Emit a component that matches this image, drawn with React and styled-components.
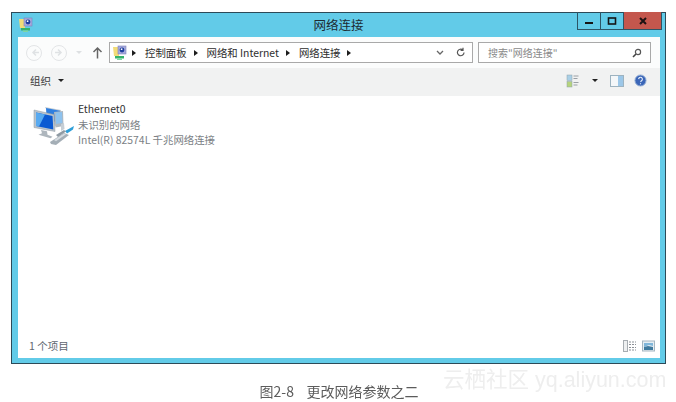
import React from 'react';
import styled, { createGlobalStyle } from 'styled-components';

const CJK = '"Noto Sans CJK SC", "Liberation Sans", sans-serif';

const GlobalStyle = createGlobalStyle`
  html, body {
    margin: 0;
    padding: 0;
    background: #fff;
    font-family: ${CJK};
  }
`;

const Page = styled.div`
  position: relative;
  width: 676px;
  height: 402px;
  overflow: hidden;
  padding: 12px 0 0 11px;
  box-sizing: border-box;
  filter: blur(0.45px);
`;

const Window = styled.div`
  width: 655px;
  height: 352px;
  box-sizing: border-box;
  border: 1px solid #2c4a58;
  background: #62cbe8;
  display: flex;
  flex-direction: column;
`;

const TitleBar = styled.div`
  position: relative;
  height: 24px;
  flex: none;
  display: flex;
  align-items: center;
  padding-left: 6px;
`;

const Title = styled.div`
  position: absolute;
  left: 0;
  right: 0;
  top: 3px;
  text-align: center;
  font-size: 12.5px;
  line-height: 17px;
  color: #1d2c33;
`;

const Controls = styled.div`
  position: absolute;
  top: -1px;
  right: 3px;
  display: flex;
`;

const ControlButton = styled.div`
  width: ${(p) => p.$w}px;
  height: 18px;
  box-sizing: border-box;
  border: 1px solid #2c5566;
  border-top: none;
  margin-left: -1px;
  background: ${(p) => p.$bg || 'transparent'};
  display: flex;
  align-items: center;
  justify-content: center;
`;

const Body = styled.div`
  flex: 1;
  margin: 0 5px 5px 6px;
  background: #fff;
  display: flex;
  flex-direction: column;
  min-height: 0;
`;

const NavBar = styled.div`
  height: 31px;
  flex: none;
  display: flex;
  align-items: center;
  padding-left: 8px;
  background: #fbfcfc;
`;

const NavCircle = styled.div`
  width: 16px;
  height: 16px;
  box-sizing: border-box;
  border: 1px solid #e3e5e7;
  border-radius: 50%;
  margin-right: 9px;
  display: flex;
  align-items: center;
  justify-content: center;
`;

const Caret = styled.span`
  width: 0;
  height: 0;
  flex: none;
  border-left: ${(p) => p.$size || 3}px solid transparent;
  border-right: ${(p) => p.$size || 3}px solid transparent;
  border-top: ${(p) => p.$size || 3}px solid ${(p) => p.$color || '#222'};
`;

const UpArrow = styled.div`
  margin: 0 6px 0 10px;
  display: flex;
`;

const AddressBox = styled.div`
  width: 364px;
  height: 21px;
  box-sizing: border-box;
  border: 1px solid #a9a9a9;
  background: #fff;
  display: flex;
  align-items: center;
  padding-left: 2px;
`;

const Crumb = styled.span`
  font-size: 10.4px;
  line-height: 14px;
  color: #2d2d2d;
  white-space: nowrap;
`;

const CrumbArrow = styled.span`
  width: 0;
  height: 0;
  flex: none;
  margin: 0 9px 0 ${(p) => p.$left || 7}px;
  border-top: 3px solid transparent;
  border-bottom: 3px solid transparent;
  border-left: 4px solid #1c1c1c;
`;

const AddressTools = styled.div`
  margin-left: auto;
  display: flex;
  align-items: center;
  gap: 12px;
  padding-right: 6px;
`;

const SearchBox = styled.div`
  width: 173px;
  height: 21px;
  margin-left: 5px;
  box-sizing: border-box;
  border: 1px solid #a9a9a9;
  background: #fff;
  display: flex;
  align-items: center;
  justify-content: space-between;
  padding: 0 8px 0 9px;
  font-size: 10px;
  color: #8a8a8a;
`;

const Toolbar = styled.div`
  height: 28px;
  flex: none;
  background: #f1f2f2;
  display: flex;
  align-items: center;
  padding: 0 13px 3px 12px;
  box-sizing: border-box;
`;

const ToolLabel = styled.span`
  font-size: 10.5px;
  color: #3b3b3b;
  margin-right: 7px;
`;

const ToolRight = styled.div`
  margin-left: auto;
  display: flex;
  align-items: center;
  gap: 12px;
`;

const HelpSlot = styled.span`
  display: flex;
  margin-left: -2px;
`;

const Content = styled.div`
  flex: 1;
  padding: 5px 0 0 15px;
  display: flex;
  align-items: flex-start;
  min-height: 0;
`;

const Item = styled.div`
  display: flex;
  gap: 2px;
`;

const ItemIcon = styled.div`
  width: 43px;
  height: 46px;
  flex: none;
  padding-top: 3px;
`;

const ItemText = styled.div`
  display: flex;
  flex-direction: column;
`;

const ItemLine = styled.div`
  font-size: 10.4px;
  line-height: 15.5px;
  white-space: nowrap;
  color: ${(p) => p.$color || '#7b7f85'};
`;

const StatusBar = styled.div`
  height: 23px;
  flex: none;
  display: flex;
  align-items: center;
  justify-content: space-between;
  padding: 0 5px 2px 11px;
  box-sizing: border-box;
  font-size: 10.5px;
  color: #5e6670;
`;

const StatusIcons = styled.div`
  display: flex;
  align-items: center;
  gap: 6px;
`;

const Caption = styled.div`
  margin: 19px 0 0 -9px;
  text-align: center;
  font-size: 14px;
  line-height: 17px;
  color: #5c5c5c;
  white-space: pre;
`;

const Watermark = styled.div`
  position: absolute;
  top: 368px;
  left: 443px;
  font-size: 21.5px;
  line-height: 24px;
  color: #eeeeee;
  white-space: nowrap;
  font-family: "Liberation Sans", "Noto Sans CJK SC", sans-serif;
`;

function NetworkFolder({ size = 15 }) {
  return (
    <svg width={size} height={size + 1} viewBox="0 0 15 16">
      <path d="M1 2h5l1 1v8H2z" fill="#f2dc78" />
      <rect x="6" y="1" width="8" height="8" fill="#a6a9dc" stroke="#7d82bd" strokeWidth="0.6" />
      <circle cx="10" cy="5" r="2.4" fill="#1f3f9e" />
      <rect x="8.8" y="3.4" width="1.6" height="1.6" fill="#fff" />
      <path d="M3 11h9v2.5H3z" fill="#35b36a" />
      <path d="M5 13.5h5v1.5H5z" fill="#7fd6a4" />
    </svg>
  );
}

function NavArrowIcon({ dir }) {
  const d = dir === 'left' ? 'M8 3.500L5 6.500L8 9.500M5 6.500H11' : 'M5 3.500L8 6.500L5 9.500M8 6.500H2';
  return (
    <svg width="13" height="13" viewBox="0 0 13 13">
      <path d={d} fill="none" stroke="#dfe2e4" strokeWidth="1.500" />
    </svg>
  );
}

function ComputerIcon() {
  return (
    <svg width="43" height="44" viewBox="0 0 43 44">
      <path d="M12 3l16 3 1 15-7 1z" fill="#c3ccd4" />
      <path d="M13 4l14 2.800 .8 12-14-2.800z" fill="#2f7fe0" />
      <path d="M21 8l9-1 .5 15-8 1.500z" fill="#aeb8c1" />
      <path d="M22.500 8.500l6.500-.5 .4 11-6.500 1z" fill="#8ec2ee" />
      <path d="M1 6l20 4.500 1 17-21-4z" fill="#b9c3cc" stroke="#8e99a3" strokeWidth="0.5" />
      <path d="M3 8.500l16.500 3.500 .8 13.500L3 22z" fill="#0b5ad2" />
      <path d="M3 8.500l9 2-6 12-3-.5z" fill="#58aaf0" />
      <path d="M8 26l6 1.200.5 3.500 5 2-2 1.500-12-3.500 3.500-1.500z" fill="#aeb6bd" />
      <path d="M28 20l3-1 .5 6-3.500 2z" fill="#c6ced5" />
      <path d="M17 38l14-9 5 2-13 10-5-1z" fill="#a4aeb6" />
      <path d="M21 36l10-6.500 2 .8-10 7z" fill="#d5dbe0" />
      <path d="M32 27l9-5-1 3.500-6 4z" fill="#2f9fd8" />
      <path d="M23 31l8-5 2 1.500-8 5.500z" fill="#8f9aa3" />
    </svg>
  );
}

export default function App() {
  return (
    <>
      <GlobalStyle />
      <Page>
        <Window>
          <TitleBar>
            <NetworkFolder />
            <Title>网络连接</Title>
            <Controls>
              <ControlButton $w={24}>
                <svg width="10" height="10" viewBox="0 0 10 10"><rect x="1" y="6" width="8" height="2" fill="#151515" /></svg>
              </ControlButton>
              <ControlButton $w={24}>
                <svg width="10" height="10" viewBox="0 0 10 10"><rect x="1.500" y="2" width="7" height="6" fill="none" stroke="#151515" strokeWidth="1.600" /></svg>
              </ControlButton>
              <ControlButton $w={39} $bg="#c4574d">
                <svg width="10" height="10" viewBox="0 0 10 10"><path d="M2 2L8 8M8 2L2 8" stroke="#1c1212" strokeWidth="2" /></svg>
              </ControlButton>
            </Controls>
          </TitleBar>
          <Body>
            <NavBar>
              <NavCircle><NavArrowIcon dir="left" /></NavCircle>
              <NavCircle><NavArrowIcon dir="right" /></NavCircle>
              <Caret $color="#dde0e2" />
              <UpArrow>
                <svg width="11" height="13" viewBox="0 0 11 13">
                  <path d="M5.500 12.500V2M1.500 6L5.500 2L9.500 6" fill="none" stroke="#666" strokeWidth="1.500" />
                </svg>
              </UpArrow>
              <AddressBox>
                <NetworkFolder />
                <CrumbArrow $left={5} />
                <Crumb>控制面板</Crumb>
                <CrumbArrow />
                <Crumb>网络和 Internet</Crumb>
                <CrumbArrow />
                <Crumb>网络连接</Crumb>
                <CrumbArrow />
                <AddressTools>
                  <svg width="8" height="6" viewBox="0 0 8 6"><path d="M1 1l3 3 3-3" fill="none" stroke="#666" strokeWidth="1.300" /></svg>
                  <svg width="10" height="11" viewBox="0 0 10 11"><path d="M8 5.500a3.300 3.300 0 1 1-1.200-2.600M7 .8v2.500H4.600" fill="none" stroke="#555" strokeWidth="1.200" /></svg>
                </AddressTools>
              </AddressBox>
              <SearchBox>
                <span>搜索"网络连接"</span>
                <svg width="10" height="10" viewBox="0 0 10 10"><circle cx="6" cy="4" r="2.600" fill="none" stroke="#555" strokeWidth="1.200" /><path d="M4 6L1 9" stroke="#444" strokeWidth="1.600" /></svg>
              </SearchBox>
            </NavBar>
            <Toolbar>
              <ToolLabel>组织</ToolLabel>
              <Caret />
              <ToolRight>
                <svg width="14" height="14" viewBox="0 0 14 14">
                  <rect x="1" y="1" width="5" height="5.500" fill="#a9cfe6" stroke="#8fa2ad" strokeWidth="0.500" />
                  <rect x="1" y="7.500" width="5" height="5.500" fill="#b6d47c" stroke="#8fa2ad" strokeWidth="0.500" />
                  <path d="M7.500 2h5M7.500 4.500h4M7.500 8.500h5M7.500 11h4" stroke="#9aa0a5" strokeWidth="1" />
                </svg>
                <Caret />
                <svg width="14" height="14" viewBox="0 0 14 14">
                  <rect x="0.500" y="1.500" width="13" height="11" fill="#f4f7f9" stroke="#9db3c0" />
                  <rect x="8" y="2" width="5" height="10" fill="#9cc7e8" />
                </svg>
                <HelpSlot>
                  <svg width="13" height="13" viewBox="0 0 14 14">
                    <circle cx="7" cy="7" r="6" fill="#3b66b8" stroke="#9db6d8" />
                    <path d="M5 5.500a2 2 0 1 1 3 1.800L7 8.500M7 10v1" fill="none" stroke="#e8f0fa" strokeWidth="1.200" />
                  </svg>
                </HelpSlot>
              </ToolRight>
            </Toolbar>
            <Content>
              <Item>
                <ItemIcon><ComputerIcon /></ItemIcon>
                <ItemText>
                  <ItemLine $color="#333">Ethernet0</ItemLine>
                  <ItemLine>未识别的网络</ItemLine>
                  <ItemLine>Intel(R) 82574L 千兆网络连接</ItemLine>
                </ItemText>
              </Item>
            </Content>
            <StatusBar>
              <span>1 个项目</span>
              <StatusIcons>
                <svg width="13" height="12" viewBox="0 0 13 12">
                  <rect x="0.500" y="0.500" width="4" height="11" fill="#eef0f1" stroke="#a7adb2" />
                  <path d="M6 2h7M6 4.500h7M6 7.500h7M6 10h7" stroke="#8b9096" strokeWidth="1" strokeDasharray="2 1" />
                </svg>
                <svg width="13" height="12" viewBox="0 0 13 12">
                  <rect x="0.500" y="1" width="12" height="10" fill="#e6eef3" stroke="#a5b6c1" />
                  <path d="M2 3h9v3L7 5 2 7z" fill="#7fb6da" />
                  <path d="M2 7l4-1 5 1v3H2z" fill="#3f7a9e" />
                </svg>
              </StatusIcons>
            </StatusBar>
          </Body>
        </Window>
        <Caption>图2-8    更改网络参数之二</Caption>
        <Watermark>云栖社区 yq.aliyun.com</Watermark>
      </Page>
    </>
  );
}
